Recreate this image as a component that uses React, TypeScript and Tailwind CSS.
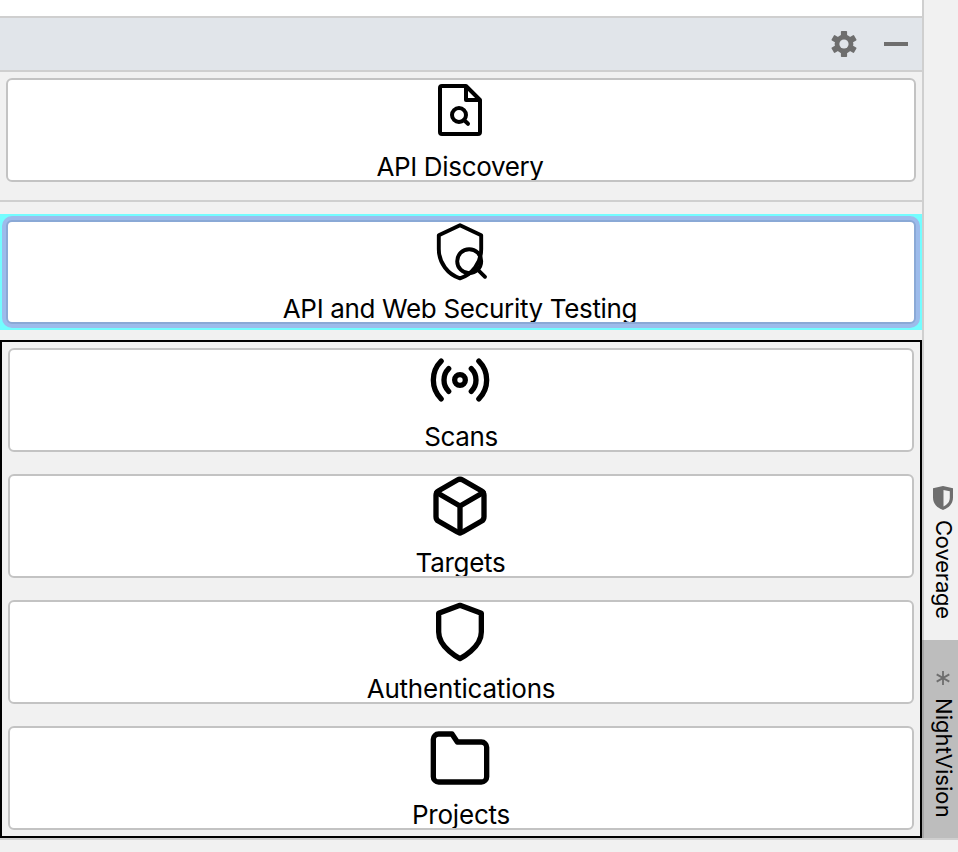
import type { ReactNode } from "react";

const stroke = {
  fill: "none",
  stroke: "#000",
  strokeLinecap: "round",
  strokeLinejoin: "round",
} as const;

function Icon({ children }: { children: ReactNode }) {
  return (
    <svg viewBox="0 0 24 24" strokeWidth={2} {...stroke} className="-mt-0.5 size-16 shrink-0">
      {children}
    </svg>
  );
}

function FineIcon({ width, children }: { width: number; children: ReactNode }) {
  return (
    <svg viewBox="-2 -2 64 64" strokeWidth={width} {...stroke} className="-mt-0.5 size-16 shrink-0">
      {children}
    </svg>
  );
}

function Card({
  label,
  icon,
  spacing,
  focused = false,
}: {
  label: string;
  icon: ReactNode;
  spacing: string;
  focused?: boolean;
}) {
  return (
    <button
      className={`flex h-[104px] w-full shrink-0 flex-col items-center overflow-hidden rounded-md border-2 bg-white pr-0.5 ${
        focused ? "border-[#8aa9d6]" : "border-[#c3c3c3]"
      }`}
    >
      {icon}
      <span className={`mt-2 whitespace-nowrap text-[26px] leading-[34px] ${spacing}`}>{label}</span>
    </button>
  );
}

function Gear() {
  return (
    <svg viewBox="-13 -13 26 26" className="size-[26px]" fill="#6e6e6e">
      {[0, 60, 120].map((a) => (
        <rect key={a} x="-3.1" y="-13" width="6.2" height="26" rx="0.8" transform={`rotate(${a})`} />
      ))}
      <circle r="9.4" />
      <circle r="4.6" fill="#e1e5ea" />
    </svg>
  );
}

export default function App() {
  return (
    <div className="flex h-[852px] w-[958px] flex-col overflow-hidden bg-[#f1f1f1] font-['Inter','Liberation_Sans',sans-serif] text-black">
      <div className="flex h-[840px] border-b-2 border-[#cfcfcf]">
        <main className="flex w-[922px] flex-col">
          <div className="h-4 bg-white" />
          <header className="flex h-14 items-center justify-end gap-[27px] border-y-2 border-[#cfcfcf] bg-[#e1e5ea] pr-3.5">
            <Gear />
            <div className="h-1 w-6 bg-[#6e6e6e]" />
          </header>
          <div className="h-[130px] border-b-2 border-[#cfcfcf] px-1.5 pt-1.5">
            <Card
              label="API Discovery"
              spacing="tracking-[-0.34px]"
              icon={
                <FineIcon width={4}>
                  <path d="M50 20V52a2 2 0 0 1-2 2H12a2 2 0 0 1-2-2V8a2 2 0 0 1 2-2H36L50 20H36V6" />
                  <circle cx="29" cy="35" r="7" />
                  <path d="M34 40l4 3.8" />
                </FineIcon>
              }
            />
          </div>
          <div className="mt-3 h-[116px] bg-[#73fdff] p-0.5">
            <div className="rounded-[10px] bg-[#9dbbeb] p-1">
              <Card
                focused
                label="API and Web Security Testing"
                spacing="tracking-[-0.34px]"
                icon={
                  <FineIcon width={3.9}>
                    <path d="M30 3.3L51.2 13.2V27C51.2 41 42 52.5 30 56.3C18 52.5 8.8 41 8.8 27V13.2Z" />
                    <circle cx="39.2" cy="39.2" r="12" />
                    <path d="M47.7 47.7L55 54.8" />
                  </FineIcon>
                }
              />
            </div>
          </div>
          <div className="mt-2.5 flex h-[498px] flex-col gap-[22px] border-2 border-black p-1.5">
            <Card
              label="Scans"
              spacing="pl-0.5 tracking-[-0.4px]"
              icon={
                <Icon>
                  <circle cx="12" cy="12" r="2" />
                  <path d="M16.24 7.76a6 6 0 0 1 0 8.49m-8.48-.01a6 6 0 0 1 0-8.49m11.31-2.82a10 10 0 0 1 0 14.14m-14.14 0a10 10 0 0 1 0-14.14" />
                </Icon>
              }
            />
            <Card
              label="Targets"
              spacing="pl-px tracking-[-0.3px]"
              icon={
                <Icon>
                  <path d="M21 16V8a2 2 0 0 0-1-1.73l-7-4a2 2 0 0 0-2 0l-7 4A2 2 0 0 0 3 8v8a2 2 0 0 0 1 1.73l7 4a2 2 0 0 0 2 0l7-4A2 2 0 0 0 21 16z" />
                  <path d="M3.27 6.96L12 12.01l8.73-5.05M12 22.08V12" />
                </Icon>
              }
            />
            <Card
              label="Authentications"
              spacing="pl-0.5 tracking-[-0.2px]"
              icon={
                <Icon>
                  <path d="M12 22s8-4 8-10V5l-8-3-8 3v7c0 6 8 10 8 10z" />
                </Icon>
              }
            />
            <Card
              label="Projects"
              spacing="pl-0.5 tracking-[-0.2px]"
              icon={
                <Icon>
                  <path d="M22 19a2 2 0 0 1-2 2H4a2 2 0 0 1-2-2V5a2 2 0 0 1 2-2h5l2 3h9a2 2 0 0 1 2 2z" />
                </Icon>
              }
            />
          </div>
        </main>
        <aside className="flex w-9 flex-col justify-end">
          <div className="flex h-[640px] flex-col items-center justify-end border-l-2 border-[#cfcfcf] pb-[21px] pl-1">
            <svg viewBox="0 0 20 24" className="mb-2.5 h-6 w-5 shrink-0">
              <path d="M10 0L20 2.3V11.500C20 18 15.500 22 10 24C4.500 22 0 18 0 11.500V2.300Z" fill="#6e6e6e" />
              <path d="M10.500 4L16.800 5.200V11.500C16.800 16 14 18.800 10.500 20.500Z" fill="#f1f1f1" />
            </svg>
            <span className="-mr-0.5 whitespace-nowrap text-[22px] leading-7 tracking-[-0.2px] [writing-mode:vertical-rl]">
              Coverage
            </span>
          </div>
          <div className="flex h-[198px] flex-col items-center justify-end border-l-2 border-[#a6a6a6] bg-[#bdbdbd] pb-5 pl-1">
            <svg viewBox="-8 -8 16 16" className="mb-3 size-4 shrink-0" stroke="#6e6e6e" strokeWidth="1.8">
              <path d="M0-7V7M-6.300-3.600L6.300 3.600M-6.300 3.600L6.300-3.600" />
            </svg>
            <span className="-mr-0.5 whitespace-nowrap text-[22px] leading-7 tracking-[0.06px] [writing-mode:vertical-rl]">
              NightVision
            </span>
          </div>
        </aside>
      </div>
    </div>
  );
}
